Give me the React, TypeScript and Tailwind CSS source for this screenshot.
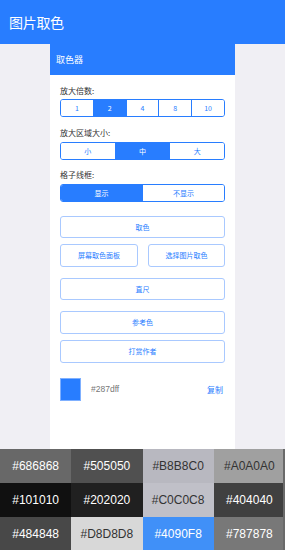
import React from "react";

const font = { fontFamily: '"Noto Sans CJK SC", "Liberation Sans", sans-serif' };

function Seg({ items, active, h }: { items: string[]; active: number; h: string }) {
  return (
    <div className={`flex ${h} border border-[#287dff] rounded-[3px] overflow-hidden`}>
      {items.map((t, i) => (
        <div
          key={t}
          className={`flex-1 flex items-center justify-center text-[7px] ${
            i > 0 ? "border-l border-[#287dff]" : ""
          } ${i === active ? "bg-[#287dff] text-white" : "bg-white text-[#287dff]"}`}
        >
          {t}
        </div>
      ))}
    </div>
  );
}

function Btn({ children, cls }: { children: React.ReactNode; cls: string }) {
  return (
    <div
      className={`flex items-center justify-center border border-[#a9c9ff] rounded-[3px] text-[7px] text-[#287dff] bg-white ${cls}`}
    >
      {children}
    </div>
  );
}

const palette = [
  ["#686868", "#505050", "#B8B8C0", "#A0A0A0"],
  ["#101010", "#202020", "#C0C0C8", "#404040"],
  ["#484848", "#D8D8D8", "#4090F8", "#787878"],
];
const light = new Set(["#B8B8C0", "#A0A0A0", "#C0C0C8", "#D8D8D8"]);

export default function App() {
  return (
    <div className="w-[300px] h-[550px] bg-white flex overflow-hidden" style={font}>
      <div className="w-[285px] flex flex-col">
        <div className="h-[44px] bg-[#287dff] flex items-center pl-[9px] text-white text-[14px] tracking-[-0.3px]">
          图片取色
        </div>
        <div className="h-[405px] bg-[#f0eff4] flex justify-start pl-[50px]">
          <div className="w-[185px] bg-white flex flex-col">
            <div className="h-[31px] bg-[#287dff] flex items-center pl-[6px] text-white text-[9px]">
              取色器
            </div>
            <div className="px-[10px] flex flex-col">
              <div className="text-[8px] text-[#333] mt-[10px] leading-[12px]">放大倍数:</div>
              <div className="mt-[2px]">
                <Seg items={["1", "2", "4", "8", "10"]} active={1} h="h-[18px]" />
              </div>
              <div className="text-[8px] text-[#333] mt-[10px] leading-[12px]">放大区域大小:</div>
              <div className="mt-[3px]">
                <Seg items={["小", "中", "大"]} active={1} h="h-[18px]" />
              </div>
              <div className="text-[8px] text-[#333] mt-[9px] leading-[12px]">格子线框:</div>
              <div className="mt-[3px]">
                <Seg items={["显示", "不显示"]} active={0} h="h-[18px]" />
              </div>
              <Btn cls="h-[22px] mt-[14px]">取色</Btn>
              <div className="flex justify-between mt-[6px]">
                <Btn cls="h-[23px] w-[78px]">屏幕取色面板</Btn>
                <Btn cls="h-[23px] w-[77px]">选择图片取色</Btn>
              </div>
              <Btn cls="h-[22px] mt-[11px]">直尺</Btn>
              <Btn cls="h-[23px] mt-[11px]">参考色</Btn>
              <Btn cls="h-[23px] mt-[6px]">打赏作者</Btn>
              <div className="flex items-center mt-[15px]">
                <div className="w-[21px] h-[23px] bg-[#287dff] border border-[#7fb0ff]" />
                <div className="ml-[10px] text-[8.5px] text-[#777]" style={{ fontFamily: '"Liberation Sans", sans-serif' }}>
                  #287dff
                </div>
                <div className="ml-auto mr-[2px] text-[8px] text-[#287dff]">复制</div>
              </div>
            </div>
          </div>
        </div>
        <div className="flex-1 flex relative">
          <div className="flex-1 grid grid-cols-4 grid-rows-[34px_34px_33px]">
            {palette.flat().map((c) => (
              <div
                key={c}
                className={`flex items-center justify-center text-[12px] ${light.has(c) ? "text-[#333]" : "text-white"}`}
                style={{ backgroundColor: c, fontFamily: '"Liberation Sans", Arial, sans-serif' }}
              >
                {c}
              </div>
            ))}
          </div>
          <div className="absolute right-0 top-0 bottom-0 w-[2px] bg-[#6a6a6a]" />
        </div>
      </div>
      <div className="flex-1 bg-white" />
    </div>
  );
}
